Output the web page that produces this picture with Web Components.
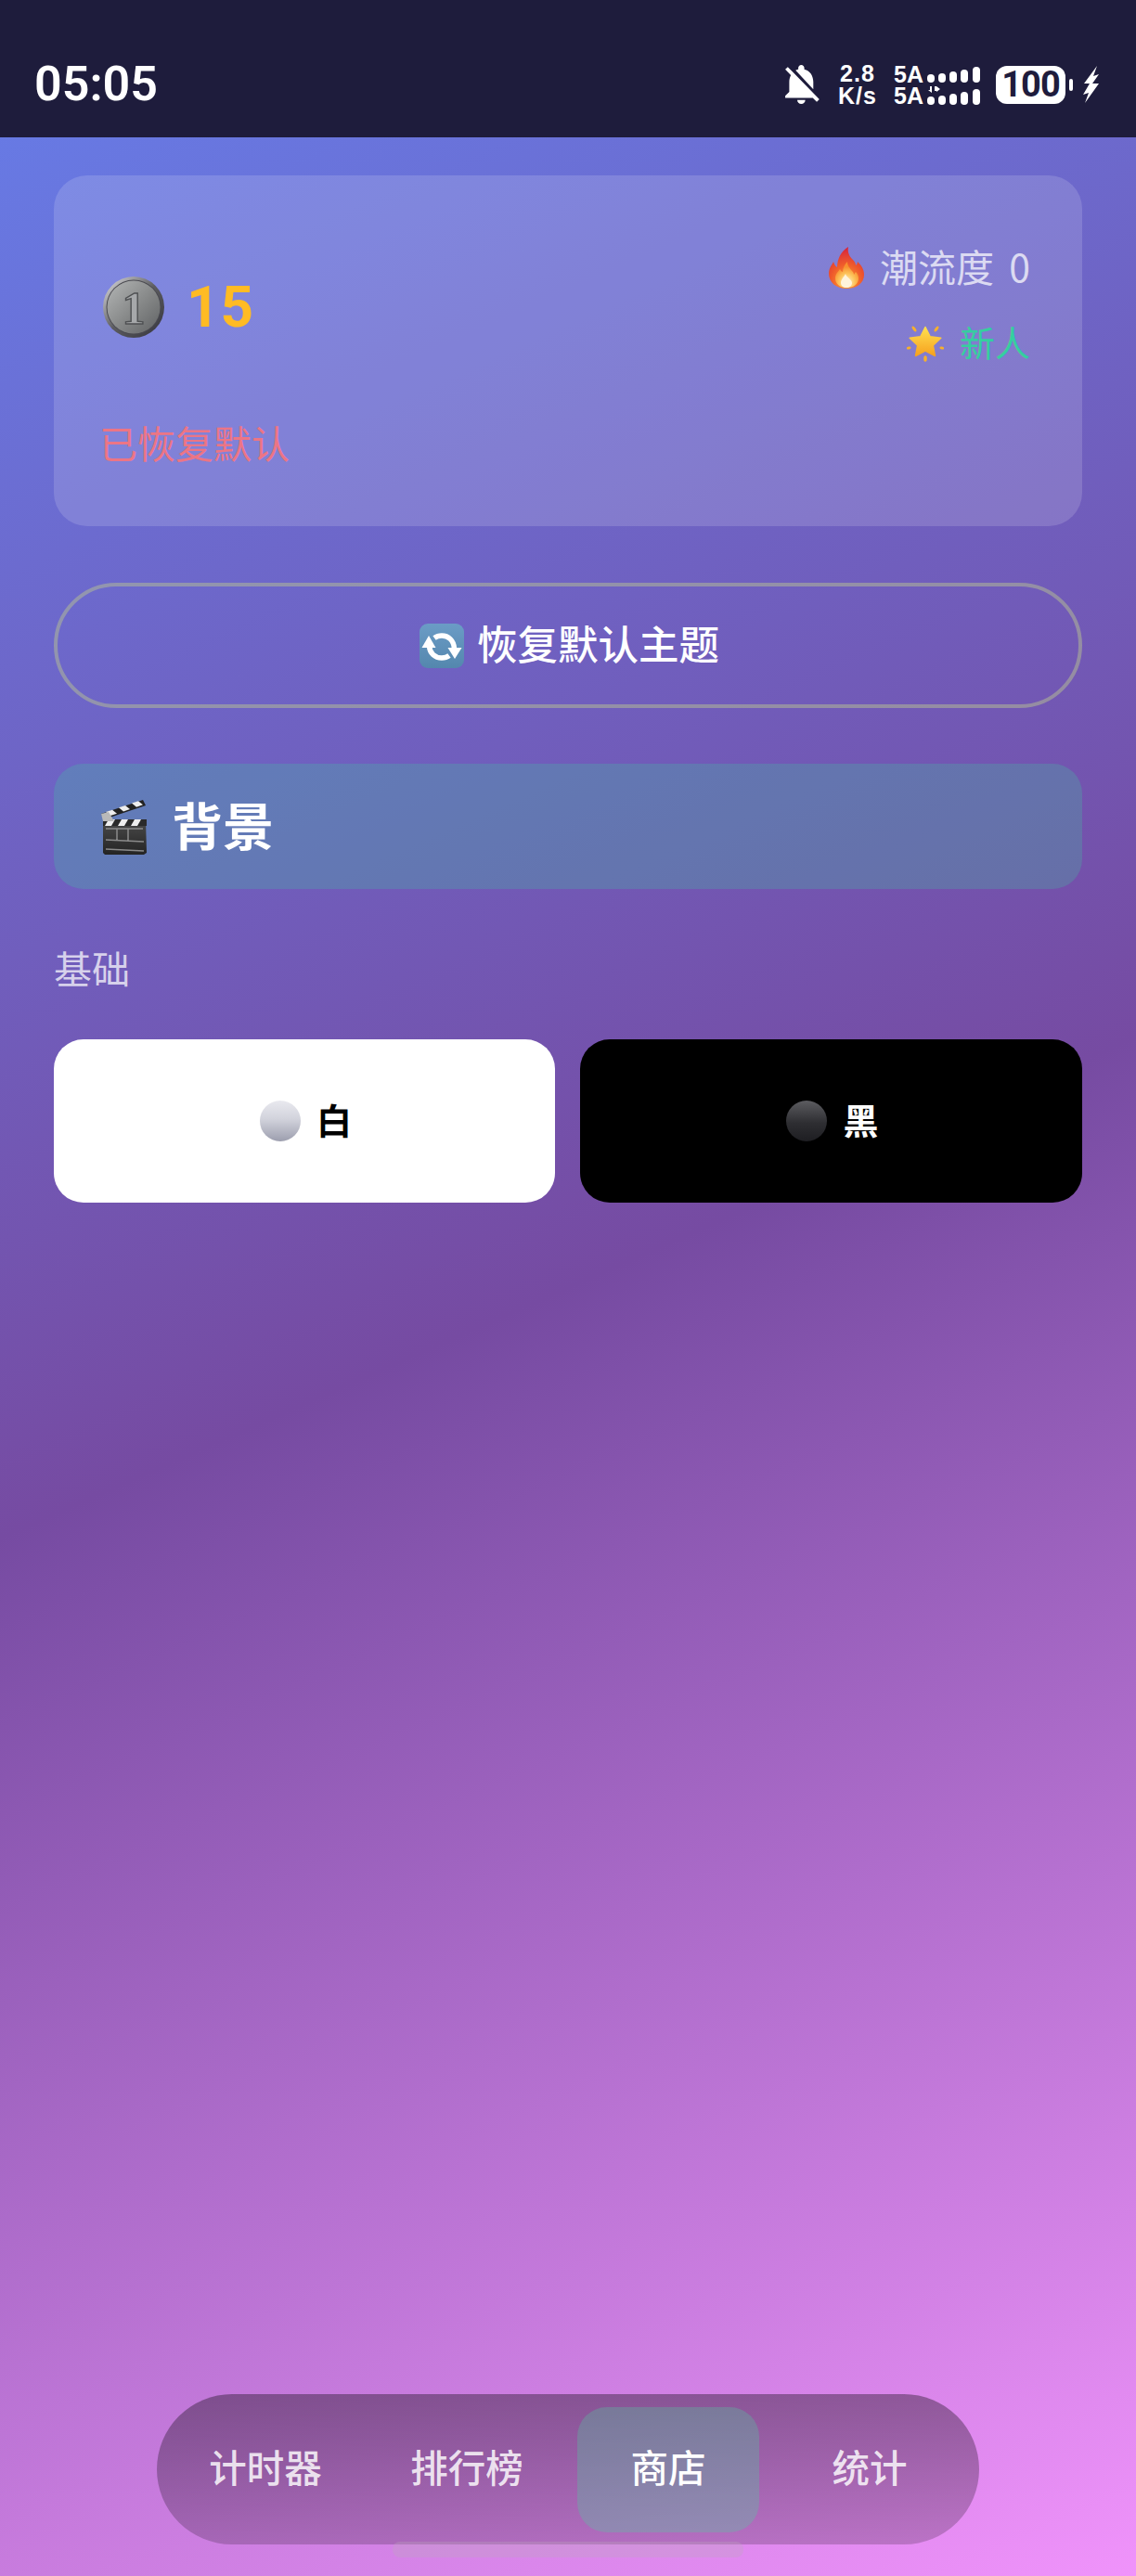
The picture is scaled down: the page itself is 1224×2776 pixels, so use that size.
<!DOCTYPE html>
<html lang="zh-CN">
<head>
<meta charset="utf-8">
<title>商店</title>
<style>
    html, body { margin: 0; padding: 0; }
    body { width: 1224px; height: 2776px; overflow: hidden; background: #1e1c3c; }
</style>
</head>
<body>
<shop-page>
    <status-bar slot="status"></status-bar>
    <wallet-card coins="15" trend="0" rank="新人" message="已恢复默认"></wallet-card>
    <reset-button>恢复默认主题</reset-button>
    <section-bar>背景</section-bar>
    <group-label>基础</group-label>
    <tile-grid>
        <theme-tile tone="white">白</theme-tile>
        <theme-tile tone="black">黑</theme-tile>
    </tile-grid>
    <bottom-nav slot="nav">
        <nav-item>计时器</nav-item>
        <nav-item>排行榜</nav-item>
        <nav-item active>商店</nav-item>
        <nav-item>统计</nav-item>
    </bottom-nav>
</shop-page>

<script>
const CJK = `"Noto Sans CJK SC", Roboto, sans-serif`;

// Colour emoji pictures, there is no emoji font to rely on
const EMOJI = {
    coin: `<svg viewBox="0 0 66 66" width="66" height="66">
        <defs>
            <linearGradient id="c1" x1="0" y1="0" x2="1" y2="1"><stop offset="0" stop-color="#e4e4e6"/><stop offset=".5" stop-color="#5c5c60"/><stop offset="1" stop-color="#33333c"/></linearGradient>
            <linearGradient id="c2" x1="0" y1="0" x2="1" y2="1"><stop offset="0" stop-color="#b4b6b6"/><stop offset=".55" stop-color="#858787"/><stop offset="1" stop-color="#606264"/></linearGradient>
        </defs>
        <circle cx="33" cy="33" r="33" fill="url(#c1)"/>
        <circle cx="33" cy="33" r="29.500" fill="#4a4a50"/>
        <circle cx="33" cy="33" r="28.500" fill="url(#c2)"/>
        <text x="33" y="51" text-anchor="middle" font-family="Liberation Serif" font-weight="700" font-size="50" fill="#a6a8aa" stroke="#4e5052" stroke-width="1.400">1</text>
    </svg>`,
    fire: `<svg viewBox="0 0 38 45" width="38" height="45">
        <defs>
            <radialGradient id="f1" cx=".5" cy=".85" r=".8"><stop offset="0" stop-color="#ffa636"/><stop offset=".55" stop-color="#ef5b2b"/><stop offset="1" stop-color="#d8283c"/></radialGradient>
            <radialGradient id="f2" cx=".5" cy=".8" r=".6"><stop offset="0" stop-color="#fff3d0"/><stop offset=".55" stop-color="#fdc65e"/><stop offset="1" stop-color="#f8912f"/></radialGradient>
        </defs>
        <path d="M19 45C8 45 0 38 0 29c0-6 3-9 5-13 1 3 2 5 4 6 0-9 4-17 12-22-1 6 1 10 5 14 2 2 3 4 3 6 1-1 2-2 2-4 4 4 7 8 7 14 0 9-8 15-19 15z" fill="url(#f1)"/>
        <path d="M19 44c-7 0-12-4-12-10 0-5 3-7 5-10 1 2 2 3 3 3 0-4 2-8 5-11 0 5 3 7 5 10 1 1 2 2 2 4 1-1 1-2 2-3 2 2 3 4 3 7 0 6-5 10-13 10z" fill="url(#f2)"/>
        <path d="M19 44c-3 0-6-2-6-5 0-4 3-6 5-10 1 4 7 6 7 10 0 3-3 5-6 5z" fill="#fff4dc"/>
    </svg>`,
    star: `<svg viewBox="0 0 40 40" width="40" height="40">
        <defs><linearGradient id="s1" x1="0" y1="0" x2="0" y2="1"><stop offset="0" stop-color="#ffe04f"/><stop offset="1" stop-color="#f6a11f"/></linearGradient></defs>
        <path d="M20 2.500l5.200 10.300 11.600 1.500-8.500 7.900 2.200 11.300L20 28l-10.500 5.500 2.200-11.300-8.500-7.900 11.600-1.500z" fill="url(#s1)" stroke="url(#s1)" stroke-width="1.500" stroke-linejoin="round"/>
        <g fill="#f7b02c">
            <ellipse cx="8" cy="4.500" rx="1.500" ry="3.400" transform="rotate(-38 8 4.500)"/>
            <ellipse cx="32" cy="4.500" rx="1.500" ry="3.400" transform="rotate(38 32 4.500)"/>
            <ellipse cx="2.200" cy="25" rx="2.400" ry="1.500" transform="rotate(-14 2.200 25)"/>
            <ellipse cx="37.800" cy="25" rx="2.400" ry="1.500" transform="rotate(14 37.800 25)"/>
            <ellipse cx="20" cy="36.500" rx="1.800" ry="3.300"/>
        </g>
    </svg>`,
    repeat: `<svg viewBox="0 0 48 48" width="48" height="48">
        <defs><linearGradient id="r1" x1="0" y1="0" x2="0" y2="1"><stop offset="0" stop-color="#6b9cc6"/><stop offset="1" stop-color="#5487ae"/></linearGradient></defs>
        <rect width="48" height="48" rx="9" fill="url(#r1)"/>
        <g fill="none" stroke="#fff" stroke-width="5.500">
            <path d="M16 15.500c2-1.500 5-2.500 8-2.500 7 0 13 5 13.500 14"/>
            <path d="M10.500 24c.5 8 6 13 13.500 13 3 0 6-1 8-2.500"/>
        </g>
        <path d="M2.500 26h15l-7.500-13z" fill="#fff"/>
        <path d="M45.500 26h-15l7.500 12z" fill="#fff"/>
    </svg>`,
    clapper: `<svg viewBox="0 0 50 60" width="50" height="60">
        <defs>
            <linearGradient id="k1" x1="0" y1="0" x2="0" y2="1"><stop offset="0" stop-color="#4a4a4a"/><stop offset="1" stop-color="#242424"/></linearGradient>
        </defs>
        <path d="M2 23h46l1 35-3 2H4l-2-2z" fill="url(#k1)"/>
        <path d="M2 22h47v7H2z" fill="#2a2a2a"/>
        <g fill="#eee"><path d="M8 22h7l-4 7H4z"/><path d="M22 22h7l-4 7h-7z"/><path d="M36 22h7l-4 7h-7z"/></g>
        <path d="M0 16L45 1l3 6L3 22z" fill="#222"/>
        <g fill="#eee"><path d="M5 14l7-2.300 5 4-7 2.400z"/><path d="M19 9.300l7-2.300 5 4-7 2.400z"/><path d="M33 4.600l7-2.300 5 4-7 2.400z"/></g>
        <path d="M0 16l8-2 6 10H2z" fill="#b9b9b9"/>
        <g fill="none" stroke="#8a8a8a" stroke-width="1.500">
            <path d="M5 32h40M5 44l41 2M5 54l41 2M17 32v12M29 32v13"/>
        </g>
    </svg>`,
    white: `<svg viewBox="0 0 44 44" width="44" height="44">
        <defs><linearGradient id="w1" x1="0" y1="0" x2="0" y2="1"><stop offset="0" stop-color="#e9e9ef"/><stop offset=".45" stop-color="#d2d3dc"/><stop offset="1" stop-color="#9c9eae"/></linearGradient></defs>
        <circle cx="22" cy="22" r="22" fill="url(#w1)"/>
    </svg>`,
    black: `<svg viewBox="0 0 44 44" width="44" height="44">
        <defs><linearGradient id="b1" x1="0" y1="0" x2="0" y2="1"><stop offset="0" stop-color="#5c5c60"/><stop offset=".55" stop-color="#2e2e32"/><stop offset="1" stop-color="#1e1e22"/></linearGradient></defs>
        <circle cx="22" cy="22" r="22" fill="url(#b1)"/>
    </svg>`
};

/**
 * Small base class: open shadow root filled from a style and a template
 */
class ShadowElement extends HTMLElement {
    connectedCallback() {
        this.root = this.attachShadow({mode: 'open'});
        this.root.innerHTML = `<style>${this.css}</style>${this.html}`;
    }
}

/**
 * A single colour emoji picture
 */
class EmojiIcon extends ShadowElement {
    get css() {
        return `:host { display: inline-flex; flex: none; } svg { display: block; }`;
    }
    get html() {
        return EMOJI[this.getAttribute('name')];
    }
}

/**
 * Full page: status bar, gradient body and the floating navigation
 */
class ShopPage extends ShadowElement {
    get css() {
        return `
            :host {
                display: flex;
                flex-direction: column;
                width: 1224px;
                height: 2776px;
                font-family: ${CJK};
                background: linear-gradient(156.200deg, #667eea 0%, #764ba2 50%, #f093fb 100%);
            }
            .body {
                flex: 1;
                position: relative;
                box-sizing: border-box;
                padding: 41px 58px 34px;
                display: flex;
                flex-direction: column;
            }
            .nav { margin-top: auto; display: flex; justify-content: center; }
            .home {
                position: absolute;
                left: 423px;
                top: 2591px;
                width: 378px;
                height: 17px;
                border-radius: 8px;
                background: rgba(190, 170, 190, .3);
            }
        `;
    }
    get html() {
        return `
            <slot name="status"></slot>
            <div class="body">
                <slot></slot>
                <div class="nav"><slot name="nav"></slot></div>
                <div class="home"></div>
            </div>
        `;
    }
}

/**
 * Phone status bar
 */
class StatusBar extends ShadowElement {
    get css() {
        return `
            :host {
                display: flex;
                align-items: center;
                justify-content: space-between;
                box-sizing: border-box;
                height: 148px;
                padding: 34px 40px 0 37px;
                background: #1e1c3c;
                color: #fff;
                font-family: Roboto, sans-serif;
            }
            .time { font-size: 52px; font-weight: 600; line-height: 60px; }
            .icons { display: flex; align-items: center; }
            .bell { display: block; width: 38px; height: 42px; margin-right: 20px; }
            .speed { font: 700 25px/24px "Liberation Sans", sans-serif; text-align: center; width: 42px; margin-right: 18px; letter-spacing: 1px; }
            .speed div { height: 24px; }
            .sim { display: grid; grid-template-columns: 32px 57px; column-gap: 4px; row-gap: 3px; font: 700 25px/20px "Liberation Sans", sans-serif; margin-right: 17px; }
            .sim svg { display: block; }
            .battery {
                width: 75px; height: 41px; border-radius: 12px; background: #fff; color: #1e1c3c;
                display: flex; align-items: center; justify-content: center;
                font-size: 38px; font-weight: 700; line-height: 41px; letter-spacing: -1px;
            }
            .nub { width: 4px; height: 13px; border-radius: 2px; background: #fff; margin: 0 10px 0 4px; }
            .bolt { display: block; width: 18px; height: 40px; }
        `;
    }
    get html() {
        const bars = `
            <rect x="0" y="8" width="8" height="9" rx="4"/>
            <rect x="12" y="7" width="8" height="10" rx="4"/>
            <rect x="24" y="5" width="8" height="12" rx="4"/>
            <rect x="36" y="3" width="8" height="14" rx="4"/>
            <rect x="49" y="0" width="8" height="17" rx="4"/>`;
        return `
            <div class="time">05:05</div>
            <div class="icons">
                <svg class="bell" viewBox="3.500 2.500 17.600 19.500" preserveAspectRatio="none" fill="#fff">
                    <path d="M20 18.690L7.840 6.140 5.270 3.490 4 4.760l2.800 2.800v.010c-.520.990-.800 2.160-.800 3.420v5l-2 2v1h13.730l2 2L21 19.720l-1-1.030zM12 22c1.110 0 2-.890 2-2h-4c0 1.110.890 2 2 2zm6-7.320V11c0-3.080-1.640-5.640-4.500-6.320V4c0-.830-.670-1.500-1.500-1.500s-1.500.670-1.500 1.500v.680c-.150.030-.290.080-.420.120-.100.030-.200.070-.300.110h-.010c-.200.080-.400.170-.590.270-.010 0-.010 0-.020.010L18 14.680z"/>
                </svg>
                <div class="speed"><div>2.8</div><div>K/s</div></div>
                <div class="sim">
                    <span>5A</span>
                    <svg viewBox="0 0 57 20" width="57" height="20" fill="#fff"><g transform="translate(0 2)">${bars}</g></svg>
                    <span>5A</span>
                    <svg viewBox="0 0 57 20" width="57" height="20" fill="#fff">
                        <path d="M3 0h2v7l-4-3h2zM8 0h2l4 3-4 3v-1H8z"/>
                        <g transform="translate(0 3)">${bars}</g>
                    </svg>
                </div>
                <div class="battery">100</div>
                <div class="nub"></div>
                <svg class="bolt" viewBox="0 0 18 40" fill="#fff"><path d="M16 0L2 19h6L1 31l6-2-4 11 15-21h-7l7-10-6 2z"/></svg>
            </div>
        `;
    }
}

/**
 * Balance card with coins, trend score, rank and a message
 */
class WalletCard extends ShadowElement {
    get css() {
        return `
            :host {
                display: block;
                box-sizing: border-box;
                height: 378px;
                padding: 71px 56px 0 49px;
                border-radius: 36px;
                background: rgba(255, 255, 255, .15);
            }
            .top { display: flex; align-items: center; justify-content: space-between; height: 138px; }
            .coins { display: flex; align-items: center; gap: 24px; margin: 4px 0 0 4px; }
            .count { font: 700 62px/70px Roboto, sans-serif; color: #ffbb24; letter-spacing: 1px; }
            .stats { display: flex; flex-direction: column; align-items: flex-end; gap: 26px; }
            .stat { display: flex; align-items: center; height: 56px; line-height: 56px; }
            .stat span { margin-bottom: 5px; }
            .trend { color: rgba(255, 255, 255, .72); gap: 17px; font-size: 41px; word-spacing: 7px; }
            .rank { color: #35cf9f; font-size: 38px; gap: 17px; }
            .message { margin-top: 50px; font-size: 41px; line-height: 56px; color: #ec7585; }
        `;
    }
    get html() {
        return `
            <div class="top">
                <div class="coins">
                    <emoji-icon name="coin"></emoji-icon>
                    <span class="count">${this.getAttribute('coins')}</span>
                </div>
                <div class="stats">
                    <div class="stat trend"><emoji-icon name="fire"></emoji-icon><span>潮流度 ${this.getAttribute('trend')}</span></div>
                    <div class="stat rank"><emoji-icon name="star"></emoji-icon><span>${this.getAttribute('rank')}</span></div>
                </div>
            </div>
            <div class="message">${this.getAttribute('message')}</div>
        `;
    }
}

/**
 * Outlined pill button
 */
class ResetButton extends ShadowElement {
    get css() {
        return `
            :host {
                display: flex;
                align-items: center;
                justify-content: center;
                gap: 14px;
                box-sizing: border-box;
                height: 135px;
                margin-top: 61px;
                padding-left: 3px;
                border: 4px solid rgba(184, 194, 145, .5);
                border-radius: 68px;
                color: #fff;
                font-size: 43.500px;
                font-weight: 500;
                line-height: 60px;
            }
            span { margin-bottom: 5px; }
        `;
    }
    get html() {
        return `<emoji-icon name="repeat"></emoji-icon><span><slot></slot></span>`;
    }
}

/**
 * Section heading bar
 */
class SectionBar extends ShadowElement {
    get css() {
        return `
            :host {
                display: flex;
                align-items: center;
                gap: 26px;
                box-sizing: border-box;
                height: 135px;
                margin-top: 60px;
                padding-left: 51px;
                border-radius: 32px;
                background: rgba(60, 205, 160, .25);
                color: #fff;
                font-size: 55px;
                font-weight: 700;
            }
            span { margin-bottom: 7px; }
        `;
    }
    get html() {
        return `<emoji-icon name="clapper"></emoji-icon><span><slot></slot></span>`;
    }
}

class GroupLabel extends ShadowElement {
    get css() {
        return `
            :host {
                display: block;
                margin-top: 55px;
                color: rgba(255, 255, 255, .72);
                font-size: 41px;
                line-height: 58px;
            }
        `;
    }
    get html() {
        return `<slot></slot>`;
    }
}

class TileGrid extends ShadowElement {
    get css() {
        return `:host { display: grid; grid-template-columns: 540px 541px; column-gap: 27px; margin-top: 49px; }`;
    }
    get html() {
        return `<slot></slot>`;
    }
}

/**
 * Theme choice tile
 */
class ThemeTile extends ShadowElement {
    get css() {
        return `
            :host {
                display: flex;
                align-items: center;
                justify-content: center;
                gap: 17px;
                box-sizing: border-box;
                height: 176px;
                padding-left: 3px;
                border-radius: 32px;
                font-size: 38px;
                font-weight: 700;
            }
            :host([tone="white"]) { background: #fff; color: #000; }
            :host([tone="black"]) { background: #000; color: #fff; }
            span { margin-bottom: 6px; }
        `;
    }
    get html() {
        return `<emoji-icon name="${this.getAttribute('tone')}"></emoji-icon><span><slot></slot></span>`;
    }
}

/**
 * Floating navigation pill
 */
class BottomNav extends ShadowElement {
    get css() {
        return `
            :host {
                display: flex;
                gap: 21px;
                box-sizing: border-box;
                width: 886px;
                height: 162px;
                padding: 14px 19px 13px;
                border-radius: 81px;
                background: linear-gradient(180deg, rgba(0, 0, 0, .35), rgba(0, 0, 0, .19));
            }
        `;
    }
    get html() {
        return `<slot></slot>`;
    }
}

class NavItem extends ShadowElement {
    get css() {
        return `
            :host {
                display: flex;
                align-items: center;
                justify-content: center;
                box-sizing: border-box;
                width: 196px;
                padding-bottom: 7px;
                border-radius: 32px;
                color: rgba(255, 255, 255, .84);
                font-size: 40.500px;
                font-weight: 500;
                line-height: 56px;
            }
            :host([active]) { background: rgba(78, 205, 160, .3); color: #fff; }
        `;
    }
    get html() {
        return `<slot></slot>`;
    }
}

customElements.define('emoji-icon', EmojiIcon);
customElements.define('shop-page', ShopPage);
customElements.define('status-bar', StatusBar);
customElements.define('wallet-card', WalletCard);
customElements.define('reset-button', ResetButton);
customElements.define('section-bar', SectionBar);
customElements.define('group-label', GroupLabel);
customElements.define('tile-grid', TileGrid);
customElements.define('theme-tile', ThemeTile);
customElements.define('bottom-nav', BottomNav);
customElements.define('nav-item', NavItem);
</script>
</body>
</html>
